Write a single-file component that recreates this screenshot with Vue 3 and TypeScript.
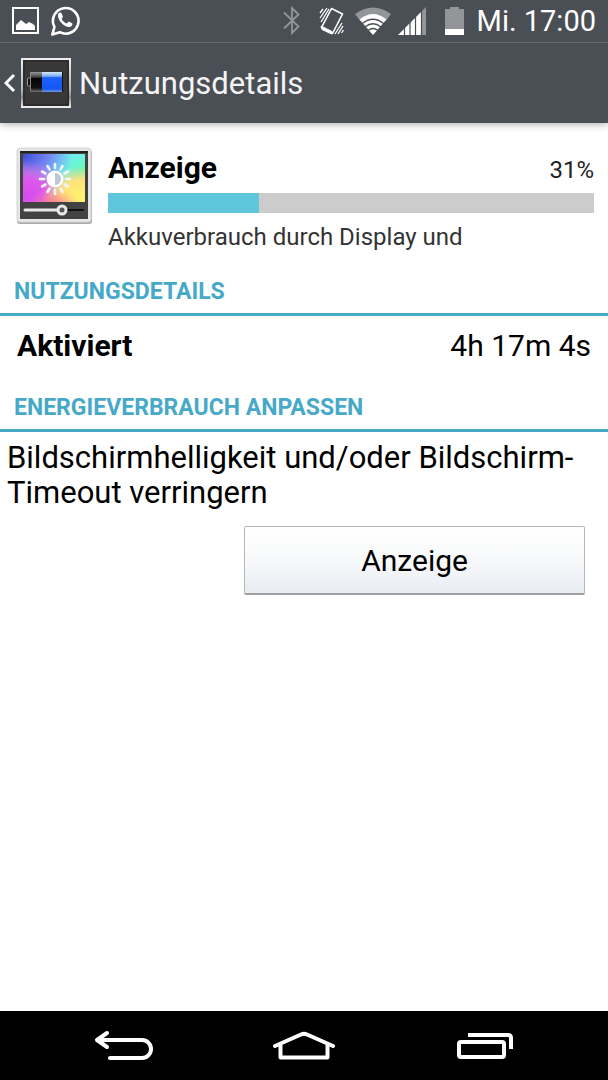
<script setup lang="ts">
import { ref } from 'vue'

interface Detail {
  label: string
  value: string
}

const percent = ref<number>(31)
const details: Detail[] = [{ label: 'Aktiviert', value: '4h 17m 4s' }]
const rays: number[] = Array.from({ length: 12 }, (_, i) => i * 30)
</script>

<template>
  <div class="screen">
    <header class="top">
      <div class="status">
        <svg class="notif" width="28" height="28" viewBox="0 0 28 28" aria-hidden="true">
          <rect x="1" y="1" width="25" height="25" fill="none" stroke="#fff" stroke-width="2" />
          <path d="M4 23v-5l5-5 5 4 3-2 4 2 2 2v4z" fill="#fff" />
        </svg>
        <svg class="notif" width="30" height="32" viewBox="0 0 30 32" aria-hidden="true">
          <path d="M1.300 29.500l2.200-7.500A12.800 12.800 0 1 1 8.800 27.200z" fill="none" stroke="#fff" stroke-width="2.600" stroke-linejoin="round" />
          <path d="M7 9.500c.6-1.600 2-2.300 3.200-1.700l1.800 3.600c.1.700-1.500 1.900-1.300 2.500 1 2.200 2.800 3.700 5 4.500.7.200 1.600-1.900 2.300-1.800l3.400 1.800c.4 1.500-1 3.100-2.600 3.500C13.600 22.800 6.400 15.500 7 9.500z" fill="#fff" />
        </svg>
        <div class="system">
          <svg class="bt" width="18" height="30" viewBox="0 0 18 30" aria-hidden="true">
            <path d="M1 6.500L15.500 20.500 9 27V2l6.500 6.500L1 22.500" fill="none" stroke="#92959a" stroke-width="1.800" />
          </svg>
          <svg class="vib" width="26" height="30" viewBox="0 0 26 30" aria-hidden="true">
            <path d="M12.500 2.500L23.500 8 13.500 27.500 2.500 21.500z" fill="none" stroke="#fff" stroke-width="1.600" stroke-linejoin="round" />
            <path d="M2 20l11 5.500L12.500 28 3 23.500z" fill="#fff" stroke="#fff" stroke-linejoin="round" />
            <path d="M1 7l3-4M1 12l7-10M2 16l8-13M16 28l7-11M19 28l5-8M22.500 27l2-3" stroke="#fff" stroke-width="1.300" />
          </svg>
          <svg class="wifi" width="38" height="30" viewBox="0 0 38 30" aria-hidden="true">
            <path d="M1 8Q19-5 37 8l-4.500 6Q19 3 5.500 14z" fill="#939598" />
            <path d="M5.500 13.500Q19 2.500 32.500 13.500L19 29z" fill="#fff" />
            <path d="M8.500 17.500Q19 9 29.500 17.500M11 21Q19 14.500 27 21M14 24.500Q19 20.500 24 24.500" fill="none" stroke="#4a4e55" stroke-width="1.300" />
          </svg>
          <svg class="signal" width="29" height="30" viewBox="0 0 29 30" aria-hidden="true">
            <path d="M0 29L24 5v24z" fill="#fff" />
            <path d="M24 5l4-4v28h-4z" fill="#939598" />
            <path d="M6.500 20v9M12 15v14M17.500 10v19M23.500 4v25" stroke="#4a4e55" stroke-width="1.200" />
          </svg>
          <svg class="bat" width="20" height="30" viewBox="0 0 20 30" aria-hidden="true">
            <path d="M0 3h5V1h9v2h5v21H0z" fill="#939598" />
            <path d="M0 23h19v6H0z" fill="#fff" />
          </svg>
          <time class="clock">Mi. 17:00</time>
        </div>
      </div>
      <button class="up" type="button" aria-label="Zurück">
        <svg width="12" height="20" viewBox="0 0 12 20" aria-hidden="true">
          <path d="M10 2L2 10l8 8" fill="none" stroke="#fff" stroke-width="3" />
        </svg>
        <svg width="50" height="50" viewBox="0 0 50 50" aria-hidden="true">
          <defs>
            <linearGradient id="frame" x2="0" y2="1">
              <stop offset="0" stop-color="#eee" /><stop offset=".65" stop-color="#b5b5b5" /><stop offset=".8" stop-color="#8c8885" /><stop offset="1" stop-color="#eee" />
            </linearGradient>
            <linearGradient id="cell" x2="0" y2="1">
              <stop offset="0" stop-color="#d5eaff" /><stop offset=".22" stop-color="#78a8ed" /><stop offset=".28" stop-color="#1c60f8" /><stop offset=".85" stop-color="#1556f5" /><stop offset="1" stop-color="#7799dd" />
            </linearGradient>
            <linearGradient id="empty" x2="0" y2="1">
              <stop offset="0" stop-color="#999" /><stop offset=".25" stop-color="#444" /><stop offset=".32" stop-color="#050505" /><stop offset=".8" stop-color="#111" /><stop offset="1" stop-color="#777" />
            </linearGradient>
          </defs>
          <rect x="1" y="1" width="48" height="48" fill="#383838" stroke="url(#frame)" stroke-width="2" />
          <path d="M3 3h44v44H3z" fill="none" stroke="#222" />
          <rect x="6.500" y="20" width="3" height="8" rx="1" fill="#111" stroke="#999" />
          <rect x="9" y="14" width="13" height="20" rx="1" fill="url(#empty)" />
          <path d="M21 14h20v20H21z" fill="url(#cell)" />
          <path d="M41.500 14v20" stroke="#111" />
          <path d="M9.500 15v18" stroke="#888" />
        </svg>
        <span class="title">Nutzungsdetails</span>
      </button>
    </header>

    <main class="content">
      <section class="summary">
        <svg class="app-icon" width="78" height="80" viewBox="0 0 78 80" aria-hidden="true">
          <defs>
            <radialGradient id="blue" cx="0" cy="0" r=".8"><stop offset="0" stop-color="#3e49dc" /><stop offset=".5" stop-color="#7284f2" /><stop offset="1" stop-color="#7284f2" stop-opacity="0" /></radialGradient>
            <radialGradient id="green" cx="1" cy=".35" r=".65"><stop offset="0" stop-color="#5dffa9" /><stop offset="1" stop-color="#71eef4" stop-opacity="0" /></radialGradient>
            <radialGradient id="pink" cx=".05" cy=".85" r=".7"><stop offset="0" stop-color="#d74af0" /><stop offset=".5" stop-color="#dc5bea" /><stop offset="1" stop-color="#e66bd8" stop-opacity="0" /></radialGradient>
            <radialGradient id="yellow" cx=".95" cy=".9" r=".65"><stop offset="0" stop-color="#fff36d" /><stop offset=".55" stop-color="#fee37a" /><stop offset="1" stop-color="#ffd38b" stop-opacity="0" /></radialGradient>
            <radialGradient id="rose" cx=".5" cy="1.100" r=".4"><stop offset="0" stop-color="#ff666d" /><stop offset="1" stop-color="#ff90ab" stop-opacity="0" /></radialGradient>
          </defs>
          <rect x="1" y="3" width="75" height="74" rx="3" fill="#aaa" />
          <rect x="1" y="1" width="74" height="74" rx="3" fill="#e6e6e6" stroke="#d4d4d4" />
          <path d="M4 4h68v68H4z" fill="#424242" />
          <path d="M4 4h68v2H4z" fill="#222" />
          <path d="M7 7h62v48H7z" fill="#78e9fa" />
          <path d="M7 7h62v48H7z" fill="url(#green)" />
          <path d="M7 7h62v48H7z" fill="url(#blue)" />
          <path d="M7 7h62v48H7z" fill="url(#pink)" />
          <path d="M7 7h62v48H7z" fill="url(#yellow)" />
          <path d="M7 7h62v48H7z" fill="url(#rose)" />
          <g transform="translate(39 32)">
            <path v-for="r in rays" :key="r" d="M0-11v-4" :transform="`rotate(${r})`" stroke="#f1f4f8" stroke-width="2.600" stroke-linecap="round" />
            <circle r="8.500" fill="#fff" />
            <path d="M0-6a6 6 0 0 1 0 12z" fill="#bcc9d5" />
          </g>
          <path d="M9 63h37" stroke="#e8e8e8" stroke-width="3" stroke-linecap="round" />
          <path d="M46 63h22" stroke="#111" stroke-width="2" />
          <circle cx="46" cy="63" r="4" fill="#555" stroke="#e8e8e8" stroke-width="3" />
        </svg>
        <div class="info">
          <div class="info-head">
            <h1 class="name">Anzeige</h1>
            <span class="percent">{{ percent }}%</span>
          </div>
          <div class="bar" role="progressbar" aria-label="Akkuverbrauch" :aria-valuenow="percent" aria-valuemin="0" aria-valuemax="100">
            <div class="fill" :style="{ width: percent + '%' }"></div>
          </div>
          <p class="desc">Akkuverbrauch durch Display und</p>
        </div>
      </section>

      <h2 class="heading">NUTZUNGSDETAILS</h2>
      <dl class="details">
        <div v-for="d in details" :key="d.label" class="detail">
          <dt>{{ d.label }}</dt>
          <dd>{{ d.value }}</dd>
        </div>
      </dl>

      <h2 class="heading">ENERGIEVERBRAUCH ANPASSEN</h2>
      <p class="hint">Bildschirmhelligkeit und/oder Bildschirm-Timeout verringern</p>
      <div class="actions">
        <span></span>
        <button class="action" type="button">Anzeige</button>
      </div>
    </main>

    <nav class="nav">
      <button type="button" aria-label="Zurück">
        <svg width="62" height="32" viewBox="0 0 62 32" aria-hidden="true">
          <path d="M5 10h45a9 9 0 0 1 0 18H18M15 3L5 10l10 7" fill="none" stroke="#fff" stroke-width="4" stroke-linecap="round" stroke-linejoin="round" />
        </svg>
      </button>
      <button type="button" aria-label="Startseite">
        <svg width="62" height="32" viewBox="0 0 62 32" aria-hidden="true">
          <path d="M2 16L28 4.500q3-1.500 6 0L60 16M7.500 15v12.500h47V15" fill="none" stroke="#fff" stroke-width="4" stroke-linecap="round" stroke-linejoin="round" />
        </svg>
      </button>
      <button type="button" aria-label="Letzte Apps">
        <svg width="62" height="32" viewBox="0 0 62 32" aria-hidden="true">
          <rect x="5" y="12" width="45" height="15" rx="2" fill="none" stroke="#fff" stroke-width="4" />
          <path d="M14 5h40q3 0 3 3v11" fill="none" stroke="#fff" stroke-width="4" />
        </svg>
      </button>
    </nav>
  </div>
</template>

<style>
body {
  margin: 0;
  background: #fff;
}
</style>

<style scoped>
.screen {
  display: flex;
  flex-direction: column;
  min-height: 100vh;
  background: #fff;
  color: #000;
  font-family: Roboto, "Liberation Sans", sans-serif;
}

h1,
h2,
p,
dl,
dd {
  margin: 0;
}

button {
  font: inherit;
  cursor: pointer;
}

.top {
  background: #4a4e55;
  color: #fff;
  box-shadow: 0 1px 8px rgba(0, 0, 0, 0.35);
}

.status {
  display: flex;
  align-items: center;
  gap: 11px;
  height: 42px;
  padding: 0 12px;
  border-bottom: 1px solid #636b6e;
}

.system {
  display: flex;
  align-items: center;
  margin-left: auto;
}

.bt {
  margin-right: 18px;
}

.vib {
  margin-right: 9px;
}

.wifi {
  margin-right: 6px;
}

.signal {
  margin-right: 18px;
}

.bat {
  margin-right: 12px;
}

.clock {
  font-size: 29px;
  line-height: 44px;
}

.up {
  display: flex;
  align-items: center;
  width: 100%;
  height: 80px;
  padding: 0 4px;
  border: 0;
  background: none;
  color: #f4f4f4;
  text-align: left;
}

.up svg + svg {
  margin: 0 8px 0 5px;
}

.title {
  padding-top: 2px;
  font-size: 31px;
  line-height: 40px;
}

.content {
  flex: 1;
}

.summary {
  display: flex;
  gap: 14px;
  padding: 24px 14px 0 16px;
}

.app-icon {
  flex: none;
}

.info {
  flex: 1;
}

.info-head {
  display: flex;
  align-items: baseline;
  justify-content: space-between;
  height: 46px;
}

.name {
  font-size: 30px;
  font-weight: 700;
  line-height: 42px;
}

.percent {
  color: #222;
  font-size: 24px;
}

.bar {
  height: 20px;
  background: #ccc;
}

.fill {
  height: 100%;
  background: #60c6dc;
}

.desc {
  margin-top: 8px;
  color: #333;
  font-size: 24px;
  line-height: 32px;
}

.heading {
  padding: 24px 14px 6px;
  border-bottom: 3px solid #47a9c8;
  color: #47a9c8;
  font-size: 23px;
  font-weight: 700;
  line-height: 30px;
}

.detail {
  display: flex;
  justify-content: space-between;
  padding: 10px 17px 3px;
  font-size: 30px;
  line-height: 40px;
}

dt {
  font-weight: 700;
}

.hint {
  padding: 8px 7px 0;
  font-size: 31px;
  line-height: 35px;
}

.actions {
  display: grid;
  grid-template-columns: 2fr 3fr;
  padding: 16px 23px 0 17px;
}

.action {
  height: 69px;
  border: 1px solid #b4b6b8;
  border-bottom: 2px solid #9da0a2;
  border-radius: 2px;
  background: linear-gradient(#fff, #fafbfc 40%, #e9edf2);
  color: #000;
  font-size: 30px;
}

.nav {
  display: flex;
  justify-content: space-around;
  height: 69px;
  padding: 0 32px;
  background: #000;
}

.nav button {
  display: flex;
  align-items: center;
  justify-content: center;
  padding: 0;
  flex: 1;
  border: 0;
  background: none;
}
</style>
